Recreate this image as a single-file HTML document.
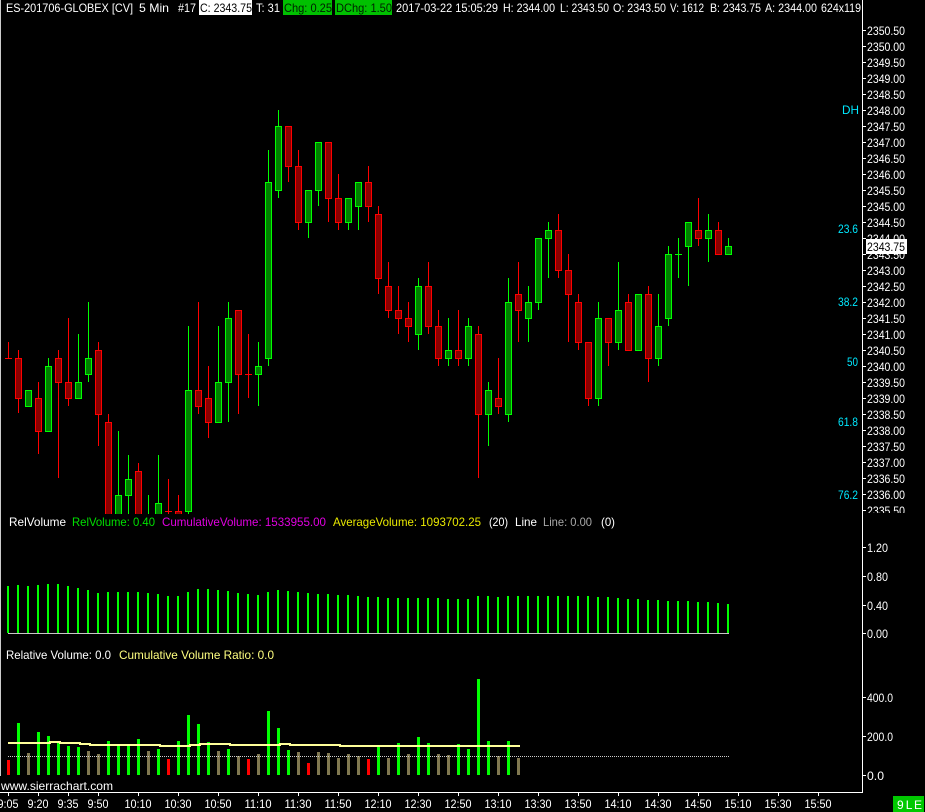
<!DOCTYPE html>
<html>
<head>
<meta charset="utf-8">
<style>
html,body{margin:0;padding:0;background:#000;width:925px;height:812px;overflow:hidden}
svg{display:block;font-family:"Liberation Sans",sans-serif;font-size:12px}
</style>
</head>
<body>
<svg width="925" height="812" viewBox="0 0 925 812" xmlns="http://www.w3.org/2000/svg">
<defs>
<clipPath id="c1"><rect x="0" y="0" width="862" height="514"/></clipPath>
<clipPath id="c2"><rect x="866" y="0" width="59" height="513"/></clipPath>
</defs>
<rect width="925" height="812" fill="#000"/>
<rect x="0" y="0" width="1" height="776" fill="#ccc"/>

<g clip-path="url(#c1)" shape-rendering="crispEdges" fill="none" stroke-width="1">
<path stroke="#f00" d="M8.5 342V358M5 358.5H12M18.5 350V413M38.5 382V454M58.5 350V478M68.5 318V406M98.5 342V446M108.5 414V520M138.5 463V520M168.5 479V514M165 511.5H172M178.5 495V520M198.5 302V414M208.5 366V438M238.5 310V414M248.5 334V398M245 374.5H252M288.5 126V182M298.5 150V230M328.5 142V222M338.5 174V230M368.5 166V222M378.5 206V294M388.5 262V318M398.5 286V334M408.5 302V342M428.5 262V334M438.5 310V366M458.5 310V366M478.5 326V478M498.5 358V414M518.5 262V342M558.5 214V278M568.5 254V342M578.5 294V350M588.5 342V406M608.5 318V366M628.5 294V350M648.5 286V382M698.5 198V246M718.5 222V254"/>
<path stroke="#0f0" d="M48.5 358V431M78.5 334V398M88.5 302V382M118.5 431V520M128.5 455V514M148.5 495V514M158.5 455V520M188.5 326V514M218.5 326V422M228.5 302V422M258.5 342V406M268.5 150V366M278.5 110V198M308.5 190V238M318.5 142V206M348.5 198V230M358.5 182V230M418.5 278V350M448.5 318V366M468.5 318V366M488.5 382V446M508.5 278V422M528.5 286V342M538.5 238V310M548.5 222V278M598.5 302V406M618.5 262V350M638.5 294V350M658.5 294V366M668.5 246V326M678.5 238V278M675 254.5H682M688.5 222V286M708.5 214V262M728.5 238V254"/>
<path stroke="#f00" fill="#8b0000" d="M15.5 358.5h6V398.5h-6zM35.5 398.5h6V431.5h-6zM55.5 358.5h6V382.5h-6zM65.5 382.5h6V398.5h-6zM95.5 350.5h6V414.5h-6zM105.5 422.5h6V530h-6zM135.5 471.5h6V530h-6zM175.5 511.5h6V530h-6zM195.5 390.5h6V406.5h-6zM205.5 398.5h6V422.5h-6zM235.5 310.5h6V374.5h-6zM285.5 126.5h6V166.5h-6zM295.5 166.5h6V222.5h-6zM325.5 142.5h6V198.5h-6zM335.5 198.5h6V222.5h-6zM365.5 182.5h6V206.5h-6zM375.5 214.5h6V278.5h-6zM385.5 286.5h6V310.5h-6zM395.5 310.5h6V318.5h-6zM405.5 318.5h6V326.5h-6zM425.5 286.5h6V326.5h-6zM435.5 326.5h6V358.5h-6zM455.5 350.5h6V358.5h-6zM475.5 334.5h6V414.5h-6zM495.5 398.5h6V406.5h-6zM515.5 294.5h6V310.5h-6zM555.5 230.5h6V270.5h-6zM565.5 270.5h6V294.5h-6zM575.5 302.5h6V342.5h-6zM585.5 342.5h6V398.5h-6zM605.5 318.5h6V342.5h-6zM625.5 302.5h6V350.5h-6zM645.5 294.5h6V358.5h-6zM695.5 230.5h6V238.5h-6zM715.5 230.5h6V254.5h-6z"/>
<path stroke="#0f0" fill="#008000" d="M25.5 390.5h6V406.5h-6zM45.5 366.5h6V431.5h-6zM75.5 382.5h6V398.5h-6zM85.5 358.5h6V374.5h-6zM115.5 495.5h6V530h-6zM125.5 479.5h6V495.5h-6zM155.5 503.5h6V530h-6zM185.5 390.5h6V511.5h-6zM215.5 382.5h6V422.5h-6zM225.5 318.5h6V382.5h-6zM255.5 366.5h6V374.5h-6zM265.5 182.5h6V358.5h-6zM275.5 126.5h6V190.5h-6zM305.5 190.5h6V222.5h-6zM315.5 142.5h6V190.5h-6zM345.5 198.5h6V222.5h-6zM355.5 182.5h6V206.5h-6zM415.5 286.5h6V334.5h-6zM445.5 350.5h6V358.5h-6zM465.5 326.5h6V358.5h-6zM485.5 390.5h6V414.5h-6zM505.5 302.5h6V414.5h-6zM525.5 302.5h6V318.5h-6zM535.5 238.5h6V302.5h-6zM545.5 230.5h6V238.5h-6zM595.5 318.5h6V398.5h-6zM615.5 310.5h6V342.5h-6zM635.5 294.5h6V350.5h-6zM655.5 326.5h6V358.5h-6zM665.5 254.5h6V318.5h-6zM685.5 222.5h6V246.5h-6zM705.5 230.5h6V238.5h-6zM725.5 246.5h6V254.5h-6z"/>
</g>

<!-- header -->
<rect x="199" y="0" width="53" height="15" fill="#fff"/>
<rect x="283" y="0" width="49" height="15" fill="#00c000"/>
<rect x="335" y="0" width="57" height="15" fill="#00c000"/>
<g fill="#fff" lengthAdjust="spacingAndGlyphs">
<text x="6" y="12" textLength="127" lengthAdjust="spacingAndGlyphs">ES-201706-GLOBEX [CV]</text>
<text x="139" y="12" textLength="30" lengthAdjust="spacingAndGlyphs">5 Min</text>
<text x="178" y="12" textLength="18" lengthAdjust="spacingAndGlyphs">#17</text>
<text x="200" y="12" textLength="52" lengthAdjust="spacingAndGlyphs" fill="#000">C: 2343.75</text>
<text x="256" y="12" textLength="24" lengthAdjust="spacingAndGlyphs">T: 31</text>
<text x="284" y="12" textLength="48" lengthAdjust="spacingAndGlyphs" fill="#002000">Chg: 0.25</text>
<text x="336" y="12" textLength="56" lengthAdjust="spacingAndGlyphs" fill="#002000">DChg: 1.50</text>
<text x="396" y="12" textLength="102" lengthAdjust="spacingAndGlyphs">2017-03-22 15:05:29</text>
<text x="503" y="12" textLength="52" lengthAdjust="spacingAndGlyphs">H: 2344.00</text>
<text x="560" y="12" textLength="49" lengthAdjust="spacingAndGlyphs">L: 2343.50</text>
<text x="613" y="12" textLength="53" lengthAdjust="spacingAndGlyphs">O: 2343.50</text>
<text x="670" y="12" textLength="34" lengthAdjust="spacingAndGlyphs">V: 1612</text>
<text x="710" y="12" textLength="51" lengthAdjust="spacingAndGlyphs">B: 2343.75</text>
<text x="765" y="12" textLength="52" lengthAdjust="spacingAndGlyphs">A: 2344.00</text>
<text x="821" y="12" textLength="40" lengthAdjust="spacingAndGlyphs">624x119</text>
</g>

<!-- axes -->
<g shape-rendering="crispEdges" fill="none" stroke="#fff">
<path d="M862.5 0V792"/>
<path d="M0 792.5H863"/>
<path stroke-width="3" stroke-dasharray="1 15" d="M864.5 30V514"/>
<path d="M863 547.5h3M863 576.5h3M863 605.5h3M863 633.5h3M863 697.5h3M863 736.5h3M863 775.5h3"/>
<path d="M8.5 793v3M38.5 793v3M68.5 793v3M98.5 793v3M138.5 793v3M178.5 793v3M218.5 793v3M258.5 793v3M298.5 793v3M338.5 793v3M378.5 793v3M418.5 793v3M458.5 793v3M498.5 793v3M538.5 793v3M578.5 793v3M618.5 793v3M658.5 793v3M698.5 793v3M738.5 793v3M778.5 793v3M818.5 793v3"/>
</g>

<!-- price labels -->
<g fill="#fff" clip-path="url(#c2)">
<text x="867" y="35" textLength="38" lengthAdjust="spacingAndGlyphs">2350.50</text>
<text x="867" y="51" textLength="38" lengthAdjust="spacingAndGlyphs">2350.00</text>
<text x="867" y="67" textLength="38" lengthAdjust="spacingAndGlyphs">2349.50</text>
<text x="867" y="83" textLength="38" lengthAdjust="spacingAndGlyphs">2349.00</text>
<text x="867" y="99" textLength="38" lengthAdjust="spacingAndGlyphs">2348.50</text>
<text x="867" y="115" textLength="38" lengthAdjust="spacingAndGlyphs">2348.00</text>
<text x="867" y="131" textLength="38" lengthAdjust="spacingAndGlyphs">2347.50</text>
<text x="867" y="147" textLength="38" lengthAdjust="spacingAndGlyphs">2347.00</text>
<text x="867" y="163" textLength="38" lengthAdjust="spacingAndGlyphs">2346.50</text>
<text x="867" y="179" textLength="38" lengthAdjust="spacingAndGlyphs">2346.00</text>
<text x="867" y="195" textLength="38" lengthAdjust="spacingAndGlyphs">2345.50</text>
<text x="867" y="211" textLength="38" lengthAdjust="spacingAndGlyphs">2345.00</text>
<text x="867" y="227" textLength="38" lengthAdjust="spacingAndGlyphs">2344.50</text>
<text x="867" y="243" textLength="38" lengthAdjust="spacingAndGlyphs">2344.00</text>
<text x="867" y="259" textLength="38" lengthAdjust="spacingAndGlyphs">2343.50</text>
<text x="867" y="275" textLength="38" lengthAdjust="spacingAndGlyphs">2343.00</text>
<text x="867" y="291" textLength="38" lengthAdjust="spacingAndGlyphs">2342.50</text>
<text x="867" y="307" textLength="38" lengthAdjust="spacingAndGlyphs">2342.00</text>
<text x="867" y="323" textLength="38" lengthAdjust="spacingAndGlyphs">2341.50</text>
<text x="867" y="339" textLength="38" lengthAdjust="spacingAndGlyphs">2341.00</text>
<text x="867" y="355" textLength="38" lengthAdjust="spacingAndGlyphs">2340.50</text>
<text x="867" y="371" textLength="38" lengthAdjust="spacingAndGlyphs">2340.00</text>
<text x="867" y="387" textLength="38" lengthAdjust="spacingAndGlyphs">2339.50</text>
<text x="867" y="403" textLength="38" lengthAdjust="spacingAndGlyphs">2339.00</text>
<text x="867" y="419" textLength="38" lengthAdjust="spacingAndGlyphs">2338.50</text>
<text x="867" y="435" textLength="38" lengthAdjust="spacingAndGlyphs">2338.00</text>
<text x="867" y="451" textLength="38" lengthAdjust="spacingAndGlyphs">2337.50</text>
<text x="867" y="467" textLength="38" lengthAdjust="spacingAndGlyphs">2337.00</text>
<text x="867" y="483" textLength="38" lengthAdjust="spacingAndGlyphs">2336.50</text>
<text x="867" y="499" textLength="38" lengthAdjust="spacingAndGlyphs">2336.00</text>
<text x="867" y="515" textLength="38" lengthAdjust="spacingAndGlyphs">2335.50</text>
</g>
<rect x="866" y="239" width="41" height="15" fill="#fff"/>
<text x="867" y="251" textLength="38" lengthAdjust="spacingAndGlyphs" fill="#000">2343.75</text>

<!-- fib labels -->
<g fill="#00e8ff">
<text x="842" y="114" textLength="17" lengthAdjust="spacingAndGlyphs">DH</text>
<text x="838" y="233" textLength="20" lengthAdjust="spacingAndGlyphs">23.6</text>
<text x="838" y="306" textLength="20" lengthAdjust="spacingAndGlyphs">38.2</text>
<text x="847" y="366" textLength="11" lengthAdjust="spacingAndGlyphs">50</text>
<text x="838" y="426" textLength="20" lengthAdjust="spacingAndGlyphs">61.8</text>
<text x="838" y="499" textLength="20" lengthAdjust="spacingAndGlyphs">76.2</text>
</g>

<!-- panel 2 text -->
<text x="9" y="526" textLength="57" lengthAdjust="spacingAndGlyphs" fill="#fff">RelVolume</text>
<text x="72" y="526" textLength="83" lengthAdjust="spacingAndGlyphs" fill="#00e000">RelVolume: 0.40</text>
<text x="162" y="526" textLength="164" lengthAdjust="spacingAndGlyphs" fill="#e000e0">CumulativeVolume: 1533955.00</text>
<text x="333" y="526" textLength="148" lengthAdjust="spacingAndGlyphs" fill="#e8e800">AverageVolume: 1093702.25</text>
<text x="489" y="526" textLength="19" lengthAdjust="spacingAndGlyphs" fill="#fff">(20)</text>
<text x="515" y="526" textLength="22" lengthAdjust="spacingAndGlyphs" fill="#fff">Line</text>
<text x="543" y="526" textLength="49" lengthAdjust="spacingAndGlyphs" fill="#a8a8a8">Line: 0.00</text>
<text x="601" y="526" textLength="14" lengthAdjust="spacingAndGlyphs" fill="#fff">(0)</text>
<g fill="#fff">
<text x="867" y="552" textLength="21" lengthAdjust="spacingAndGlyphs">1.20</text>
<text x="867" y="581" textLength="21" lengthAdjust="spacingAndGlyphs">0.80</text>
<text x="867" y="610" textLength="21" lengthAdjust="spacingAndGlyphs">0.40</text>
<text x="867" y="638" textLength="21" lengthAdjust="spacingAndGlyphs">0.00</text>
<text x="867" y="702" textLength="26" lengthAdjust="spacingAndGlyphs">400.0</text>
<text x="867" y="741" textLength="26" lengthAdjust="spacingAndGlyphs">200.0</text>
<text x="867" y="780" textLength="17" lengthAdjust="spacingAndGlyphs">0.0</text>
</g>

<!-- panel 2 bars -->
<g shape-rendering="crispEdges" fill="none">
<path stroke="#0f0" stroke-width="2" d="M8 586V633M18 585V633M28 586V633M38 585V633M48 584V633M58 584V633M68 586V633M78 588V633M88 590V633M98 593V633M108 592V633M118 592V633M128 592V633M138 592V633M148 593V633M158 594V633M168 596V633M178 596V633M188 592V633M198 589V633M208 589V633M218 590V633M228 591V633M238 593V633M248 594V633M258 595V633M268 592V633M278 590V633M288 591V633M298 592V633M308 593V633M318 594V633M328 594V633M338 595V633M348 595V633M358 596V633M368 597V633M378 597V633M388 598V633M398 598V633M408 598V633M418 598V633M428 598V633M438 598V633M448 599V633M458 599V633M468 599V633M478 596V633M488 596V633M498 597V633M508 596V633M518 596V633M528 596V633M538 596V633M548 596V633M558 596V633M568 596V633M578 596V633M588 596V633M598 597V633M608 597V633M618 598V633M628 599V633M638 599V633M648 600V633M658 600V633M668 601V633M678 601V633M688 601V633M698 602V633M708 602V633M718 603V633M728 604V633"/>
<path stroke="#c8c8c8" d="M8 633.5H729"/>
</g>

<!-- panel 3 text -->
<text x="6" y="659" textLength="105" lengthAdjust="spacingAndGlyphs" fill="#fff">Relative Volume: 0.0</text>
<text x="119" y="659" textLength="155" lengthAdjust="spacingAndGlyphs" fill="#ffff80">Cumulative Volume Ratio: 0.0</text>

<!-- panel 3 bars -->
<g shape-rendering="crispEdges" fill="none" stroke-width="3">
<path stroke="#f00" d="M8.5 760V775M168.5 759V775M248.5 759V775M308.5 763V775M368.5 759V775"/>
<path stroke="#807850" d="M28.5 753V775M88.5 751V775M98.5 754V775M148.5 751V775M218.5 751V775M238.5 756V775M258.5 754V775M298.5 752V775M318.5 752V775M328.5 753V775M338.5 758V775M348.5 754V775M358.5 756V775M388.5 758V775M408.5 754V775M438.5 754V775M448.5 755V775M498.5 756V775M518.5 758V775"/>
<path stroke="#0f0" d="M18.5 723V775M38.5 732V775M48.5 736V775M58.5 743V775M68.5 746V775M78.5 747V775M108.5 741V775M118.5 746V775M128.5 746V775M138.5 739V775M158.5 749V775M178.5 741V775M188.5 715V775M198.5 724V775M208.5 742V775M228.5 749V775M268.5 711V775M278.5 728V775M288.5 750V775M378.5 746V775M398.5 743V775M418.5 737V775M428.5 743V775M458.5 744V775M468.5 749V775M478.5 679V775M488.5 741V775M508.5 741V775"/>
<path stroke="#ffff99" stroke-width="2" d="M8 743H50V742H60V743H80V744H90V745H160V746H190V745H200V744H230V745H280V744H290V745H340V746H520"/>
<path stroke="#ccc" stroke-width="1" stroke-dasharray="1 1" d="M8 756.5H729"/>
</g>

<text x="1" y="790" textLength="112" lengthAdjust="spacingAndGlyphs" fill="#fff">www.sierrachart.com</text>

<!-- time labels -->
<g fill="#fff">
<text x="-2.5" y="808" textLength="21" lengthAdjust="spacingAndGlyphs">9:05</text>
<text x="27.5" y="808" textLength="21" lengthAdjust="spacingAndGlyphs">9:20</text>
<text x="57.5" y="808" textLength="21" lengthAdjust="spacingAndGlyphs">9:35</text>
<text x="87.5" y="808" textLength="21" lengthAdjust="spacingAndGlyphs">9:50</text>
<text x="124.5" y="808" textLength="27" lengthAdjust="spacingAndGlyphs">10:10</text>
<text x="164.5" y="808" textLength="27" lengthAdjust="spacingAndGlyphs">10:30</text>
<text x="204.5" y="808" textLength="27" lengthAdjust="spacingAndGlyphs">10:50</text>
<text x="244.5" y="808" textLength="27" lengthAdjust="spacingAndGlyphs">11:10</text>
<text x="284.5" y="808" textLength="27" lengthAdjust="spacingAndGlyphs">11:30</text>
<text x="324.5" y="808" textLength="27" lengthAdjust="spacingAndGlyphs">11:50</text>
<text x="364.5" y="808" textLength="27" lengthAdjust="spacingAndGlyphs">12:10</text>
<text x="404.5" y="808" textLength="27" lengthAdjust="spacingAndGlyphs">12:30</text>
<text x="444.5" y="808" textLength="27" lengthAdjust="spacingAndGlyphs">12:50</text>
<text x="484.5" y="808" textLength="27" lengthAdjust="spacingAndGlyphs">13:10</text>
<text x="524.5" y="808" textLength="27" lengthAdjust="spacingAndGlyphs">13:30</text>
<text x="564.5" y="808" textLength="27" lengthAdjust="spacingAndGlyphs">13:50</text>
<text x="604.5" y="808" textLength="27" lengthAdjust="spacingAndGlyphs">14:10</text>
<text x="644.5" y="808" textLength="27" lengthAdjust="spacingAndGlyphs">14:30</text>
<text x="684.5" y="808" textLength="27" lengthAdjust="spacingAndGlyphs">14:50</text>
<text x="724.5" y="808" textLength="27" lengthAdjust="spacingAndGlyphs">15:10</text>
<text x="764.5" y="808" textLength="27" lengthAdjust="spacingAndGlyphs">15:30</text>
<text x="804.5" y="808" textLength="27" lengthAdjust="spacingAndGlyphs">15:50</text>
</g>

<!-- status box -->
<rect x="893" y="796" width="31" height="16" fill="#00c800"/>
<text x="897" y="809" textLength="25" lengthAdjust="spacing" fill="#fff">9 L E</text>
</svg>
</body>
</html>
